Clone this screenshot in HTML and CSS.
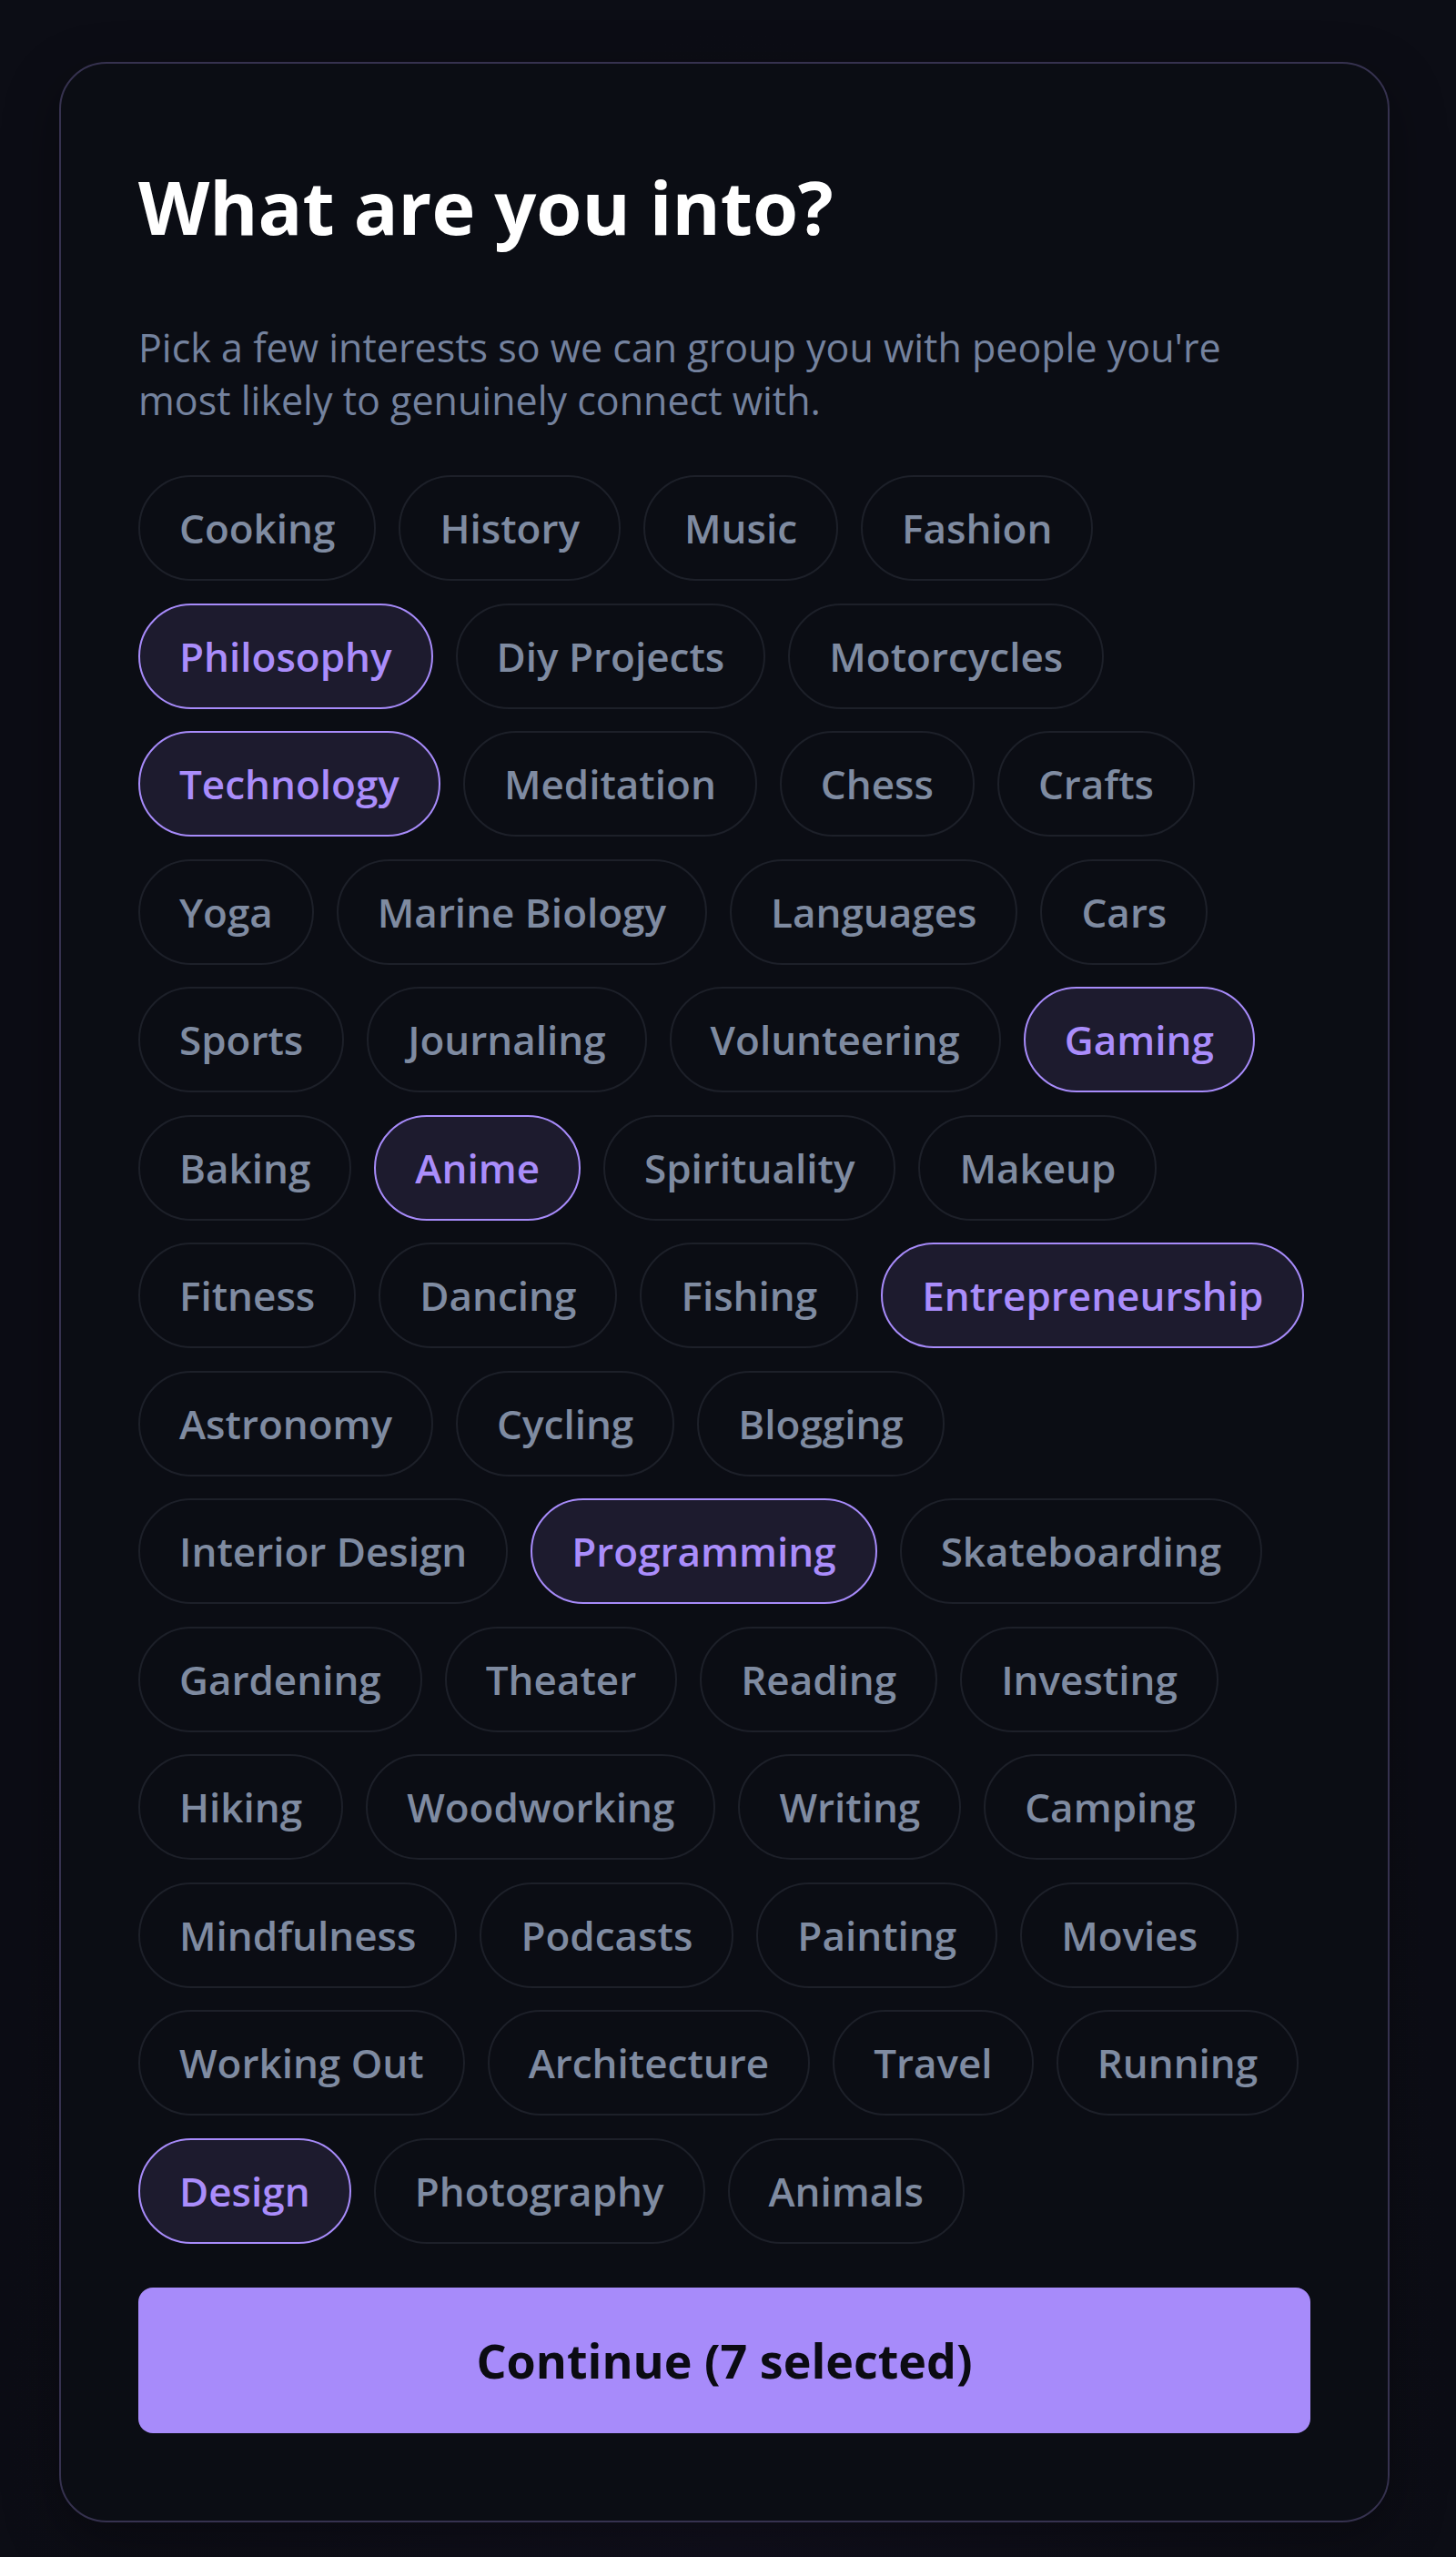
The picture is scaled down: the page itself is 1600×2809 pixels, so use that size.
FILE: index.html
```html
<!DOCTYPE html>
<html lang="en">
<head>
    <meta charset="UTF-8">
    <meta name="viewport" content="width=device-width, initial-scale=1.0">
    <title>Pick your interests</title>
    <link rel="stylesheet" href="styles.css">
</head>
<body>
    <div class="card">
        <h1 class="title">What are you into?</h1>
        <p class="subtitle">Pick a few interests so we can group you with people you're most likely to genuinely connect with.</p>

        <div class="chips" id="chips">
            <button class="chip">Cooking</button>
            <button class="chip">History</button>
            <button class="chip">Music</button>
            <button class="chip">Fashion</button>
            <button class="chip selected">Philosophy</button>
            <button class="chip">Diy Projects</button>
            <button class="chip">Motorcycles</button>
            <button class="chip selected">Technology</button>
            <button class="chip">Meditation</button>
            <button class="chip">Chess</button>
            <button class="chip">Crafts</button>
            <button class="chip">Yoga</button>
            <button class="chip">Marine Biology</button>
            <button class="chip">Languages</button>
            <button class="chip">Cars</button>
            <button class="chip">Sports</button>
            <button class="chip">Journaling</button>
            <button class="chip">Volunteering</button>
            <button class="chip selected">Gaming</button>
            <button class="chip">Baking</button>
            <button class="chip selected">Anime</button>
            <button class="chip">Spirituality</button>
            <button class="chip">Makeup</button>
            <button class="chip">Fitness</button>
            <button class="chip">Dancing</button>
            <button class="chip">Fishing</button>
            <button class="chip selected">Entrepreneurship</button>
            <button class="chip">Astronomy</button>
            <button class="chip">Cycling</button>
            <button class="chip">Blogging</button>
            <button class="chip">Interior Design</button>
            <button class="chip selected">Programming</button>
            <button class="chip">Skateboarding</button>
            <button class="chip">Gardening</button>
            <button class="chip">Theater</button>
            <button class="chip">Reading</button>
            <button class="chip">Investing</button>
            <button class="chip">Hiking</button>
            <button class="chip">Woodworking</button>
            <button class="chip">Writing</button>
            <button class="chip">Camping</button>
            <button class="chip">Mindfulness</button>
            <button class="chip">Podcasts</button>
            <button class="chip">Painting</button>
            <button class="chip">Movies</button>
            <button class="chip">Working Out</button>
            <button class="chip">Architecture</button>
            <button class="chip">Travel</button>
            <button class="chip">Running</button>
            <button class="chip selected">Design</button>
            <button class="chip">Photography</button>
            <button class="chip">Animals</button>
        </div>

        <button class="continue-btn" id="continueBtn">Continue (7 selected)</button>
    </div>

    <script>
        // Toggle chips and keep the counter in sync
        const chips = document.querySelectorAll('.chip');
        const continueBtn = document.getElementById('continueBtn');

        function updateCount() {
            const count = document.querySelectorAll('.chip.selected').length;
            continueBtn.textContent = 'Continue (' + count + ' selected)';
        }

        chips.forEach(chip => {
            chip.addEventListener('click', () => {
                chip.classList.toggle('selected');
                updateCount();
            });
        });
    </script>
</body>
</html>
```

FILE: styles.css
```css
* {
    margin: 0;
    padding: 0;
    box-sizing: border-box;
    font-family: 'Segoe UI', 'Open Sans', sans-serif;
}

body {
    min-height: 100vh;
    background: radial-gradient(ellipse at 50% 100%, #11101d 0%, #0c0d15 70%);
    background-color: #0c0d15;
    padding: 68px 0 39px 65px;
}

.card {
    width: 1462px;
    padding: 108px 85px 96px;
    background: #0b0d14;
    border: 2px solid #36324f;
    border-radius: 52px;
    box-shadow: 0 20px 60px rgba(0, 0, 0, 0.35);
}

.title {
    font-size: 81px;
    font-weight: 700;
    line-height: 1.2;
    color: #ffffff;
    margin-bottom: 78px;
}

.subtitle {
    max-width: 1250px;
    font-size: 43px;
    line-height: 58px;
    color: #74829e;
    margin-bottom: 53px;
}

.chips {
    display: flex;
    flex-wrap: wrap;
    column-gap: 25px;
    row-gap: 24.5px;
}

.chip {
    height: 116px;
    padding: 0 43px;
    display: inline-flex;
    align-items: center;
    background: transparent;
    border: 2px solid #1d2029;
    border-radius: 999px;
    color: #7f8ba1;
    font-size: 44px;
    font-weight: 600;
    cursor: pointer;
    transition: 0.2s;
}

.chip:hover {
    border-color: #2c2f3d;
}

.chip.selected {
    background: #1d1b2e;
    border: 2.5px solid #a78bfa;
    color: #aa8dfb;
    font-weight: 650;
}

.continue-btn {
    display: block;
    width: 100%;
    height: 160px;
    margin-top: 48px;
    background: #a78bfa;
    color: #0b0b12;
    border: none;
    border-radius: 16px;
    font-size: 52px;
    font-weight: 700;
    cursor: pointer;
}

.continue-btn:hover {
    background: #b49cfb;
}
```
